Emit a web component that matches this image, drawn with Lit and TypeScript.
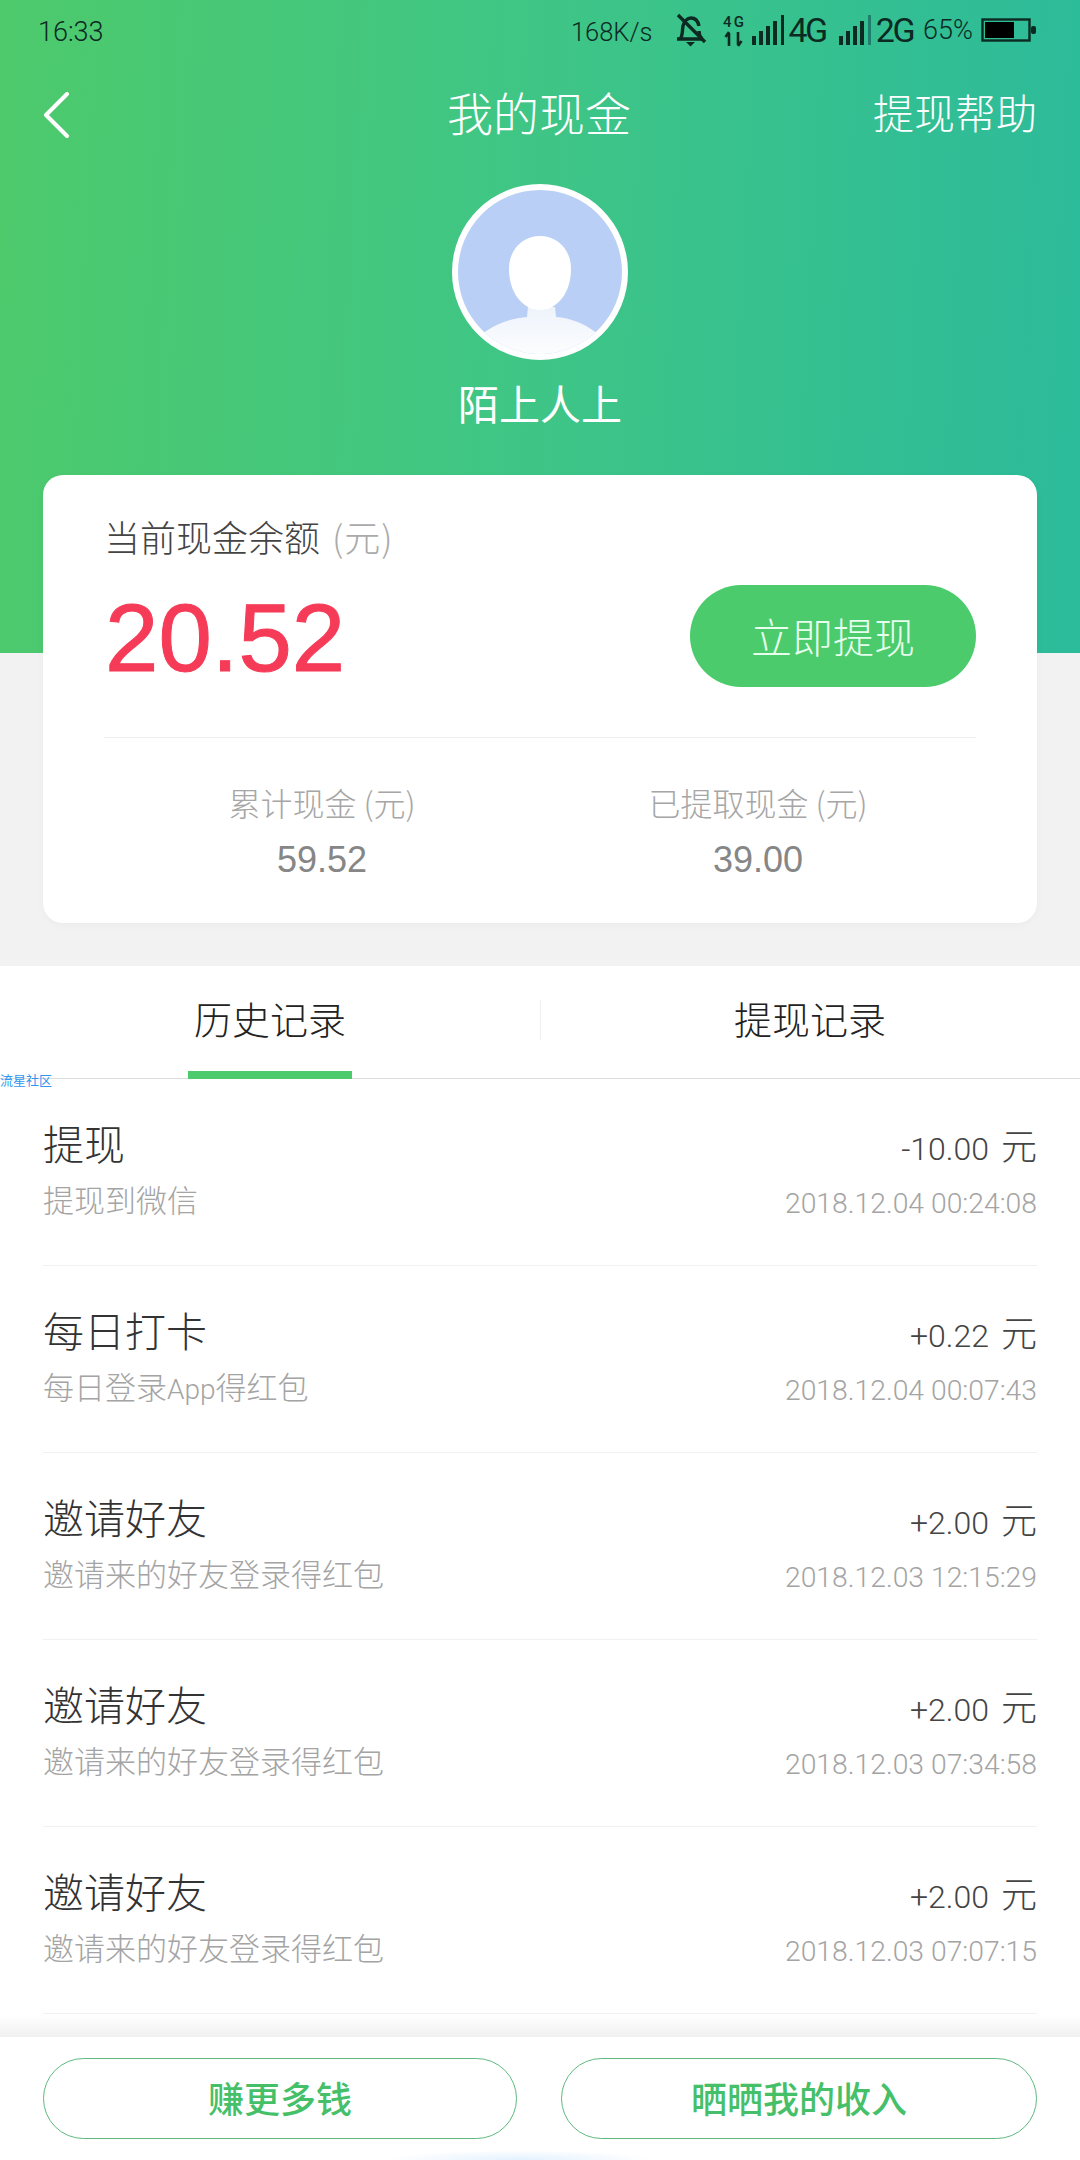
import { LitElement, html, css, svg } from "lit";
import { customElement } from "lit/decorators.js";

const rows = [
  ["提现", html`提现到微信`, "-10.00", "2018.12.04 00:24:08"],
  ["每日打卡", html`每日登录<span class="latin">App</span>得红包`, "+0.22", "2018.12.04 00:07:43"],
  ["邀请好友", html`邀请来的好友登录得红包`, "+2.00", "2018.12.03 12:15:29"],
  ["邀请好友", html`邀请来的好友登录得红包`, "+2.00", "2018.12.03 07:34:58"],
  ["邀请好友", html`邀请来的好友登录得红包`, "+2.00", "2018.12.03 07:07:15"],
];

const bars = (last: string, w: number) => svg`<svg class="bars" width="${w}" height="30" viewBox="0 0 ${w} 30">
  <rect x="0" y="21" width="4" height="9" fill="#0c2a22"/><rect x="7" y="16" width="4" height="14" fill="#0c2a22"/>
  <rect x="14" y="11" width="4" height="19" fill="#0c2a22"/><rect x="21" y="6" width="4" height="24" fill="#0c2a22"/>
  <rect x="29" y="0" width="3" height="30" fill="${last}"/></svg>`;

@customElement("app-root")
export class AppRoot extends LitElement {
  static styles = css`
    :host { display: block; width: 1080px; height: 2160px; overflow: hidden; position: relative; background: #fff;
      font-family: "Noto Sans CJK SC", Roboto, sans-serif; font-weight: 300; }
    .top { background: linear-gradient(93deg, #4eca6c 0%, #40c684 45%, #2cbb9b 100%) 0 0 / 100% 653px no-repeat, #f2f2f2;
      height: 966px; padding: 0 43px; box-sizing: border-box; }
    .status { height: 60px; margin: 0 1px 0 -5px; display: flex; align-items: center; color: #0c2a22; font-family: Roboto, sans-serif; font-size: 25.500px; font-weight: 300; }
    .status .time { flex: 1; font-size: 27px; padding-top: 3px; }
    .status .rate { padding-top: 3px; }
    .status .net { font-weight: 400; font-size: 34px; letter-spacing: -2.500px; margin: 0 0 0 4px; }
    .status .pct { font-size: 27px; margin: 0 8px 0 10px; }
    .status svg { display: block; flex: none; }
    .bell { margin-left: 22px; }
    .data { margin: 0 8px 0 16px; }
    .bars2 { margin-left: 13px; display: flex; }
    .nav { height: 104px; display: grid; grid-template-columns: 1fr auto 1fr; align-items: center; color: #fff; }
    .nav .back { display: block; margin-top: 6px; }
    .nav h1 { margin: 0 2px 3px 0; font-size: 46px; font-weight: 300; line-height: 1; }
    .nav .help { justify-self: end; font-size: 41px; line-height: 1; margin-bottom: 2px; }
    .avatar { display: block; margin: 20px auto 0; }
    .name { text-align: center; color: #fff; font-size: 41px; font-weight: 400; line-height: 60px; margin-top: 12px; height: 60px; }
    .card { margin-top: 43px; height: 448px; box-sizing: border-box; background: #fff; border-radius: 20px; padding: 36px 61px 0; box-shadow: 0 2px 8px rgba(0,0,0,0.03); }
    .label { font-size: 36px; line-height: 50px; color: #444; }
    .label span { color: #aaa; margin-left: 4px; letter-spacing: 1px; }
    .main { display: flex; justify-content: space-between; align-items: center; margin-top: 24px; height: 102px; }
    .amount { font-family: "Liberation Sans", sans-serif; font-size: 96px; font-weight: 400; color: #f53b57; line-height: 1; margin: 4px 0 0 1px; -webkit-text-stroke: 1px #f53b57; }
    .withdraw { width: 286px; height: 102px; border-radius: 51px; background: #4ccb6c; color: #e6ffee; font-size: 41px; padding-bottom: 3px; box-sizing: border-box; display: flex; align-items: center; justify-content: center; }
    .divider { height: 1px; background: #eee; margin-top: 50px; }
    .stats { display: grid; grid-template-columns: 1fr 1fr; margin-top: 42px; text-align: center; }
    .stats .k { font-size: 32px; line-height: 44px; color: #a6a6a6; }
    .stats .v { font-family: "Liberation Sans", sans-serif; font-size: 36px; line-height: 52px; color: #868686; margin-top: 10px; font-weight: 400; }
    .tabs { height: 112px; display: grid; grid-template-columns: 1fr 1fr; border-bottom: 1px solid #ddd; }
    .tab { display: flex; align-items: center; justify-content: center; font-size: 38px; color: #222; position: relative; padding-bottom: 10px; box-sizing: border-box; }
    .tab + .tab::before { content: ""; position: absolute; left: 0; top: 34px; height: 40px; width: 1px; background: #f0f0f0; }
    .tab.on::after { content: ""; position: absolute; bottom: -1px; left: 188px; width: 164px; height: 8px; background: #4ccb6c; }
    .mark { position: absolute; left: 0; top: 1073px; font-size: 13px; line-height: 14px; color: #2f97ee; font-weight: 400; }
    .list { padding: 0 43px; }
    .row { height: 186px; border-bottom: 1px solid #f1f1f1; display: grid; grid-template-columns: 1fr auto; align-content: start; }
    .t { font-size: 41px; color: #333; line-height: 56px; margin-top: 35px; }
    .a { font-family: Roboto, sans-serif; font-size: 32px; color: #444; line-height: 48px; margin-top: 41px; text-align: right; }
    .a span { font-family: "Noto Sans CJK SC", sans-serif; font-size: 36px; margin-left: 12px; }
    .s { font-family: Roboto, "Noto Sans CJK SC", sans-serif; font-size: 31px; color: #a4a4a4; line-height: 44px; margin-top: 7px; }
    .latin { font-size: 28px; }
    .d { font-family: Roboto, sans-serif; font-size: 28.300px; color: #a4a4a4; line-height: 44px; margin-top: 9px; text-align: right; }
    .foot { position: absolute; left: 0; right: 0; bottom: 0; height: 123px; background: #fff; padding: 21px 43px 0; box-sizing: border-box; display: grid; grid-template-columns: 474px 476px; gap: 44px; }
    .foot::before { content: ""; position: absolute; left: 0; right: 0; top: -22px; height: 22px; background: linear-gradient(180deg, rgba(240,240,240,0), rgba(238,238,238,0.9)); }
    .foot::after { content: ""; position: absolute; left: 385px; width: 270px; bottom: 0; height: 10px; background: radial-gradient(ellipse at 50% 100%, #e2f1ff, rgba(255,255,255,0) 70%); }
    .btn { height: 81px; box-sizing: border-box; border: 1px solid #5fb97f; border-radius: 41px; padding-bottom: 3px; display: flex; align-items: center; justify-content: center; color: #45c069; font-size: 36px; font-weight: 500; }
  `;

  render() {
    return html`
      <div class="top">
        <div class="status">
          <span class="time">16:33</span>
          <span class="rate">168K/s</span>
          <svg class="bell" width="32" height="34" viewBox="0 0 32 34" fill="none" stroke="#0c2a22" stroke-width="3.400">
            <path d="M2 26h25M5 26c3-3 2-8 3-13 1-4 4-8 8-8s7 3 8 8M24 18c0 3 1 6 3 8"/>
            <path d="M3 2l27 27"/><path d="M11 29h9l-4.500 4.500z" fill="#0c2a22" stroke="none"/></svg>
          <svg class="data" width="21" height="34" viewBox="0 0 21 34" fill="none" stroke="#0c2a22" stroke-width="2.600">
            <text x="0" y="14" font-family="Roboto" font-size="15" font-weight="500" textLength="21" fill="#0c2a22" stroke="none">4G</text>
            <path d="M6 33V20M2.500 24l3.500-5M15 19v13M18.500 28l-3.500 5"/></svg>
          ${bars("#0c2a22", 33)}
          <span class="net">4G</span>
          <span class="bars2">${bars("#1f7f6e", 33)}</span>
          <span class="net">2G</span>
          <span class="pct">65%</span>
          <svg width="55" height="24" viewBox="0 0 55 24">
            <rect x="1.500" y="1.500" width="47" height="21" fill="none" stroke="#0c2a22" stroke-width="2.400"/>
            <rect x="4" y="4" width="29" height="16" fill="#000"/>
            <rect x="50" y="8" width="5" height="8" rx="2" fill="#0c2a22"/></svg>
        </div>
        <div class="nav">
          <svg class="back" width="26" height="46" viewBox="0 0 26 46" fill="none" stroke="#fff" stroke-width="4" stroke-linecap="round" stroke-linejoin="round"><path d="M24 2L3 23l21 21"/></svg>
          <h1>我的现金</h1>
          <span class="help">提现帮助</span>
        </div>
        <svg class="avatar" width="176" height="176" viewBox="0 0 176 176">
          <defs><clipPath id="c"><circle cx="88" cy="88" r="82"/></clipPath>
            <linearGradient id="b" x1="0" y1="0" x2="0" y2="1"><stop offset="0" stop-color="#eef3fb"/><stop offset="1" stop-color="#fff"/></linearGradient></defs>
          <circle cx="88" cy="88" r="88" fill="#fff"/>
          <circle cx="88" cy="88" r="82" fill="#b9cff6"/>
          <g clip-path="url(#c)">
            <path d="M30 150c16-12 32-16 45-17l1-10h27l1 10c14 1 28 6 42 17v30H30z" fill="url(#b)"/>
            <path d="M88 52c18 0 31 14 31 33 0 24-14 41-31 41S57 109 57 85c0-19 13-33 31-33z" fill="#fff"/>
          </g>
        </svg>
        <div class="name">陌上人上</div>
        <div class="card">
          <div class="label">当前现金余额 <span>(元)</span></div>
          <div class="main">
            <span class="amount">20.52</span>
            <span class="withdraw">立即提现</span>
          </div>
          <div class="divider"></div>
          <div class="stats">
            <div><div class="k">累计现金 (元)</div><div class="v">59.52</div></div>
            <div><div class="k">已提取现金 (元)</div><div class="v">39.00</div></div>
          </div>
        </div>
      </div>
      <div class="tabs">
        <div class="tab on">历史记录</div>
        <div class="tab">提现记录</div>
      </div>
      <div class="mark">流星社区</div>
      <div class="list">
        ${rows.map(
          (r) => html`<div class="row">
            <div class="t">${r[0]}</div><div class="a">${r[2]}<span>元</span></div>
            <div class="s">${r[1]}</div><div class="d">${r[3]}</div>
          </div>`
        )}
      </div>
      <div class="foot">
        <div class="btn">赚更多钱</div>
        <div class="btn">晒晒我的收入</div>
      </div>
    `;
  }
}
